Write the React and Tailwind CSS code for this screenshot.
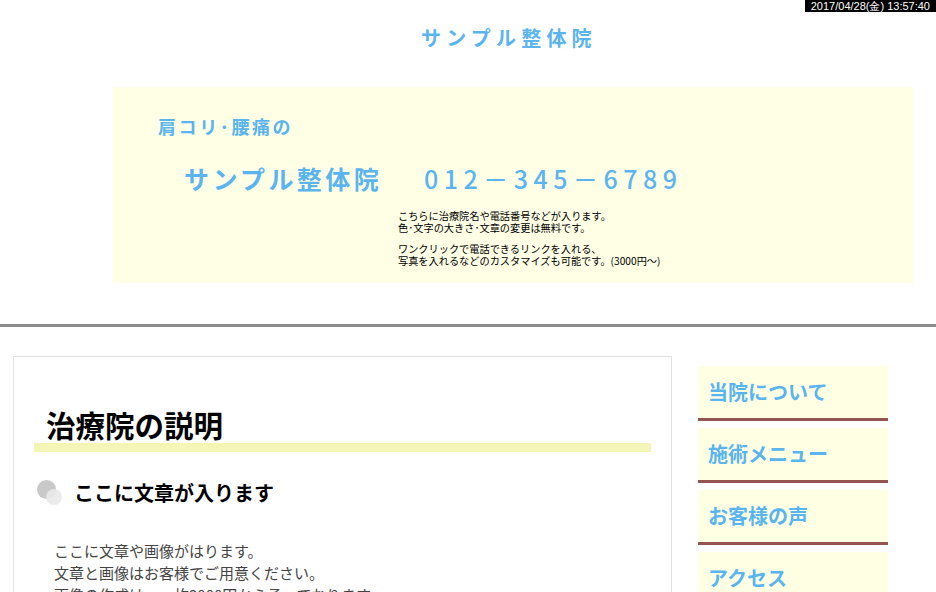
import React from "react";

const menu = ["当院について", "施術メニュー", "お客様の声", "アクセス"];

const App = () => {
  return (
    <div className="relative min-h-screen bg-white font-['Noto_Sans_CJK_JP',sans-serif] overflow-hidden">
      {/* timestamp */}
      <div className="absolute top-0 right-0 h-[12px] bg-black px-[6px] text-[11px] leading-[12px] text-white font-['Liberation_Sans',sans-serif]">
        2017/04/28(金) 13:57:40
      </div>

      <header className="h-[87px] pl-[421px] pt-[24px]">
        <h1 className="text-[20px] leading-[28px] font-bold tracking-[5.2px] text-[#5ab4ee]">
          サンプル整体院
        </h1>
      </header>

      <div className="ml-[113px] w-[800px] h-[196px] bg-[#ffffe6] pt-[27px]">
        <p className="pl-[45px] text-[18px] leading-[24px] font-bold tracking-[2.6px] text-[#5ab4ee]">
          肩コリ･腰痛の
        </p>
        <p className="pl-[71px] mt-[23px] text-[25px] leading-[34px] font-bold text-[#5ab4ee] flex">
          <span className="tracking-[3.4px]">サンプル整体院</span>
          <span className="ml-[42px] tracking-[5.5px] font-medium">012－345－6789</span>
        </p>
        <div className="pl-[285px] mt-[15px] text-[10.2px] leading-[12px] text-black">
          <p>こちらに治療院名や電話番号などが入ります。</p>
          <p>色･文字の大きさ･文章の変更は無料です。</p>
          <p className="mt-[9px]">ワンクリックで電話できるリンクを入れる、</p>
          <p>写真を入れるなどのカスタマイズも可能です。(3000円～)</p>
        </div>
      </div>

      <div className="mt-[41px] border-t-[3px] border-[#8c8c8c]" />

      <main className="flex items-start pl-[13px] pt-[29px]">
        <section className="w-[659px] h-[300px] border border-[#e3e3e3] px-[20px] pt-[49px]">
          <h2 className="pl-[12px] text-[29.5px] leading-[36px] font-bold text-black">
            治療院の説明
          </h2>
          <div className="mt-[1px] h-[9px] bg-[#f5f5b8]" />
          <div className="mt-[27px] flex items-center">
            <div className="relative w-[28px] h-[28px] ml-[3px]">
              <span className="absolute left-0 top-[1px] w-[19px] h-[19px] rounded-full bg-[#c9c9c9]" />
              <span className="absolute left-[9px] top-[10px] w-[16px] h-[16px] rounded-full bg-[#e9e9e9]/90" />
            </div>
            <h3 className="ml-[9px] text-[20px] leading-[26px] font-bold text-black">
              ここに文章が入ります
            </h3>
          </div>
          <div className="mt-[33px] pl-[20px] text-[15px] leading-[22px] text-[#444]">
            <p>ここに文章や画像がはります。</p>
            <p>文章と画像はお客様でご用意ください。</p>
            <p>画像の作成は、一枚3000円から承っております。</p>
          </div>
        </section>

        <nav className="ml-[26px] mt-[10px] w-[190px] flex flex-col gap-[7px]">
          {menu.map((m) => (
            <div
              key={m}
              className="h-[55px] bg-[#ffffe4] border-b-[3px] border-[#945550] pl-[10px] flex items-center"
            >
              <span className="text-[20px] font-bold text-[#5ab4ee]">{m}</span>
            </div>
          ))}
        </nav>
      </main>
    </div>
  );
};

export default App;
